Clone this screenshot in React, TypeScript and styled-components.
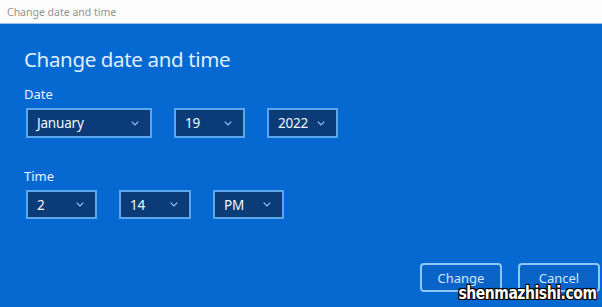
import React from "react";
import styled, { createGlobalStyle } from "styled-components";

const Global = createGlobalStyle`
  html, body { margin: 0; padding: 0; }
  body { width: 602px; height: 307px; overflow: hidden; font-family: "Noto Sans", "Open Sans", sans-serif; }
`;

const Window = styled.div`
  position: relative;
  width: 602px;
  height: 307px;
  display: flex;
  flex-direction: column;
  background: #0669d2;
`;

const TitleBar = styled.div`
  height: 23px;
  background: #fdfdfd;
  border-bottom: 1px solid #9cc3ee;
  display: flex;
  align-items: center;
  padding-left: 7px;
  font-size: 10.5px;
  color: #929292;
`;

const Body = styled.div`
  flex: 1;
  display: flex;
  flex-direction: column;
  padding: 21px 0 0 24px;
`;

const Heading = styled.h1`
  margin: 0;
  font-weight: 400;
  font-size: 20.5px;
  line-height: 28px;
  color: #dfeeff;
  letter-spacing: -0.35px;
`;

const Label = styled.div<{ $top: number }>`
  margin-top: ${(p) => p.$top}px;
  font-size: 13px;
  line-height: 16px;
  color: #e8f2ff;
`;

const Row = styled.div<{ $gap: number }>`
  display: flex;
  gap: ${(p) => p.$gap}px;
  margin-top: 6px;
  padding-left: 2px;
`;

const SelectBox = styled.div<{ $w: number; $h: number }>`
  box-sizing: border-box;
  width: ${(p) => p.$w}px;
  height: ${(p) => p.$h}px;
  border: 2px solid #5aa7ee;
  background: #0b3c78;
  display: flex;
  align-items: center;
  justify-content: space-between;
  padding: 0 11px 0 9px;
  color: #f2f7ff;
  font-size: 13.5px;
  letter-spacing: -0.2px;
`;

const Chevron = () => (
  <svg width="8" height="5" viewBox="0 0 8 5">
    <path d="M0.7 0.7 L4 4 L7.3 0.7" fill="none" stroke="#8fc4f5" strokeWidth="1.2" />
  </svg>
);

const Footer = styled.div`
  margin-top: auto;
  display: flex;
  justify-content: flex-end;
  gap: 16px;
  padding: 0 2px 15px 0;
`;

const Button = styled.button`
  box-sizing: border-box;
  width: 82px;
  height: 29px;
  border: 2px solid #8cc7f6;
  border-radius: 4px;
  background: #0a63c6;
  color: #cfe5fb;
  font-family: "Noto Sans", "Open Sans", sans-serif;
  font-size: 13px;
  padding: 0;
`;

const Watermark = styled.div`
  position: absolute;
  right: 6px;
  bottom: 5px;
  font-family: "DejaVu Sans Condensed", "DejaVu Sans", sans-serif;
  font-weight: 700;
  font-stretch: condensed;
  font-size: 18px;
  line-height: 18px;
  letter-spacing: -0.5px;
  transform: scaleX(0.86);
  transform-origin: right center;
  color: #ffffff;
  text-shadow: 0 0 2px #000, 1px 1px 0 #000, -1px -1px 0 #000, 1px -1px 0 #000, -1px 1px 0 #000;
`;

const Select = ({ value, w, h }: { value: string; w: number; h: number }) => (
  <SelectBox $w={w} $h={h}>
    <span>{value}</span>
    <Chevron />
  </SelectBox>
);

export default function App() {
  return (
    <Window>
      <Global />
      <TitleBar>Change date and time</TitleBar>
      <Body>
        <Heading>Change date and time</Heading>
        <Label $top={13}>Date</Label>
        <Row $gap={22}>
          <Select value="January" w={126} h={30} />
          <Select value="19" w={71} h={30} />
          <Select value="2022" w={71} h={30} />
        </Row>
        <Label $top={30}>Time</Label>
        <Row $gap={22}>
          <Select value="2" w={71} h={29} />
          <Select value="14" w={72} h={29} />
          <Select value="PM" w={71} h={29} />
        </Row>
        <Footer>
          <Button>Change</Button>
          <Button>Cancel</Button>
        </Footer>
      </Body>
      <Watermark>shenmazhishi.com</Watermark>
    </Window>
  );
}
